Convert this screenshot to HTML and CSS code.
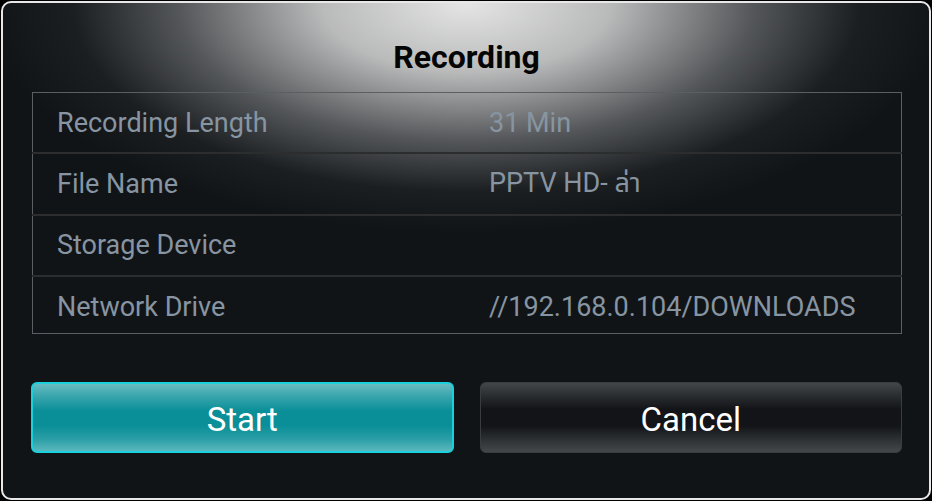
FILE: index.html
```html
<!DOCTYPE html>
<html lang="en">

<head>
  <meta charset="UTF-8">
  <meta name="viewport" content="width=device-width, initial-scale=1.0">
  <title>Recording</title>
  <link rel="stylesheet" href="styles.css">
</head>

<body>
  <div class="dialog">
    <h1 class="title">Recording</h1>
    <table class="info">
      <tbody>
        <tr>
          <td class="label">Recording Length</td>
          <td class="value">31 Min</td>
        </tr>
        <tr>
          <td class="label">File Name</td>
          <td class="value">PPTV HD- ล่า</td>
        </tr>
        <tr>
          <td class="label">Storage Device</td>
          <td class="value"></td>
        </tr>
        <tr>
          <td class="label">Network Drive</td>
          <td class="value">//192.168.0.104/DOWNLOADS</td>
        </tr>
      </tbody>
    </table>
    <div class="actions">
      <button type="button" class="btn btn-start">Start</button>
      <button type="button" class="btn btn-cancel">Cancel</button>
    </div>
  </div>
</body>

</html>
```

FILE: styles.css
```css
html,
body {
  margin: 0;
  height: 100%;
  background-color: #000;
}

body {
  font-family: Roboto, "Noto Sans", "Noto Sans Thai", sans-serif;
  padding: 1px;
  box-sizing: border-box;
}

.dialog {
  box-sizing: border-box;
  height: 499px;
  width: 930px;
  border: 2px solid #e8e8e8;
  border-radius: 10px;
  background-color: #111417;
  background-image: radial-gradient(ellipse 480px 230px at 50% 0%, rgba(240, 240, 240, 0.95) 0%, rgba(215, 215, 215, 0.85) 30%, rgba(150, 152, 155, 0.5) 60%, rgba(70, 73, 76, 0.2) 82%, rgba(17, 20, 23, 0) 100%);
  padding: 0 27px 0 28px;
  display: flex;
  flex-direction: column;
}

.title {
  margin: 0;
  height: 89px;
  padding-top: 35px;
  box-sizing: border-box;
  text-align: center;
  font-size: 32px;
  font-weight: bold;
  line-height: 38px;
  color: #050505;
}

.info {
  width: 870px;
  margin-left: 1px;
  border-collapse: collapse;
  border: 1px solid #5a5f64;
}

.info td {
  height: 59.5px;
  padding: 0;
  font-size: 27px;
  color: #8795a2;
  border-bottom: 2px solid #2b2d2f;
}

.info tr:first-child td {
  height: 59px;
}

.info tr:last-child td {
  border-bottom: none;
  height: 52px;
  padding-top: 4px;
}

.label {
  width: 432px;
  padding-left: 24px !important;
}

.actions {
  display: flex;
  gap: 26px;
  margin-top: 48px;
}

.btn {
  width: 424px;
  height: 71px;
  border-radius: 6px;
  font-family: Roboto, sans-serif;
  font-size: 33px;
  color: #fff;
  padding: 4px 0 0;
  cursor: pointer;
}

.btn-start {
  border: 2px solid #19d0dc;
  background: linear-gradient(#68bcc2 0%, #3aa5ad 18%, #0a8f98 40%, #0a8f98 62%, #2a9ea6 82%, #5ab8bd 100%);
}

.btn-cancel {
  border: 1px solid #3a3d40;
  background: linear-gradient(#44474a 0%, #2b2e31 18%, #121417 38%, #121417 62%, #2e3134 82%, #45484b 100%);
}
```
